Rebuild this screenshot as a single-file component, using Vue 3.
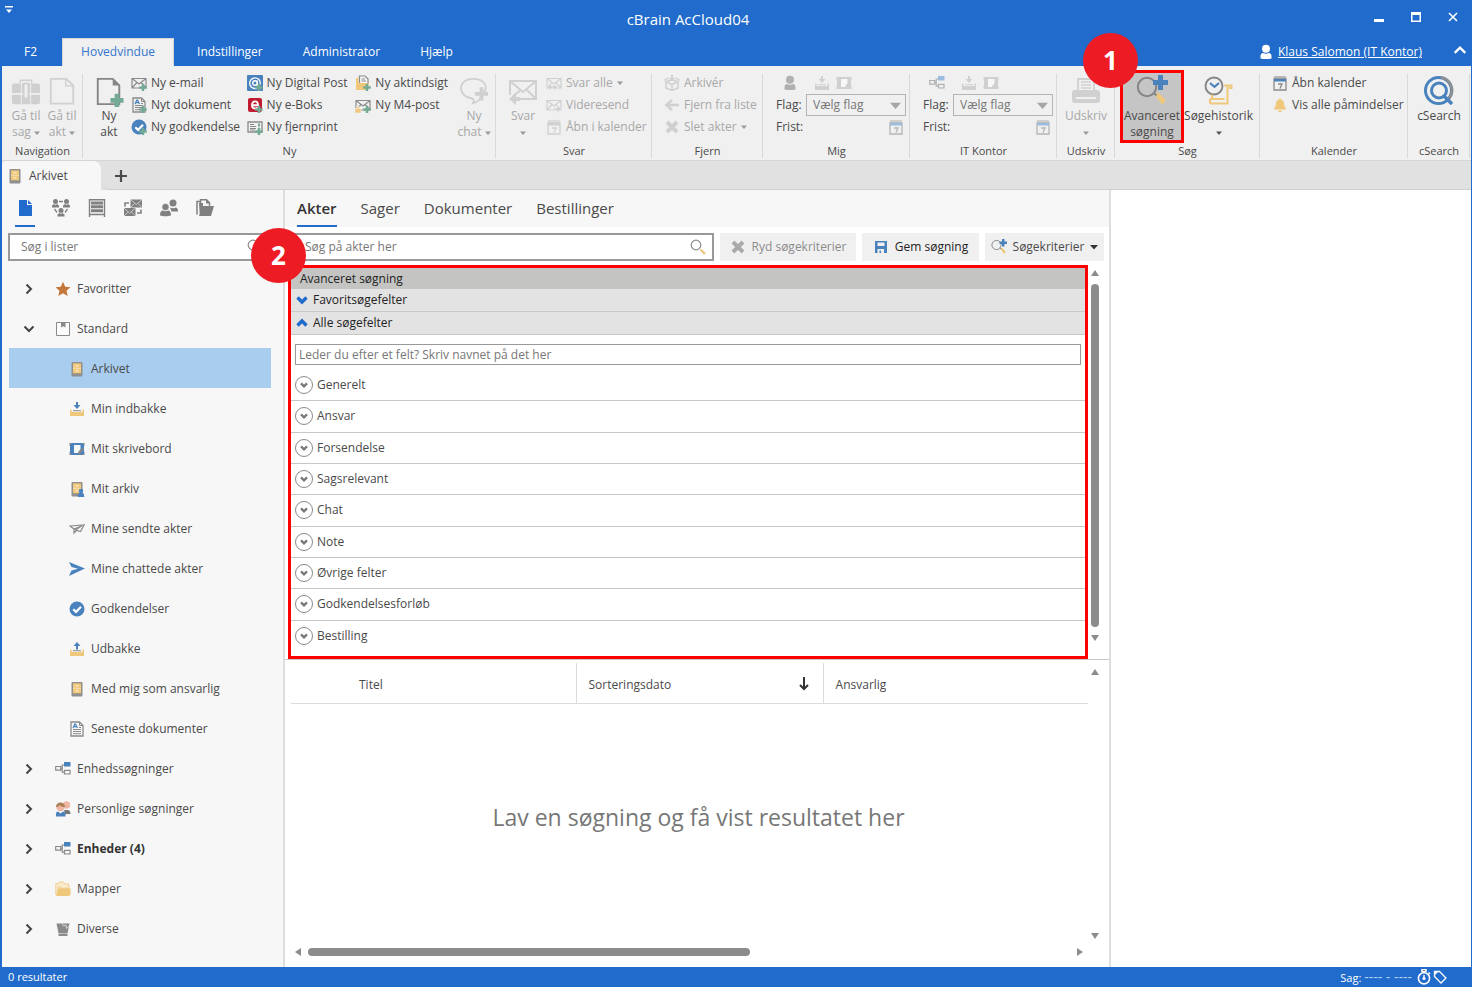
<script setup>
import { ref } from 'vue'

const ribbonTabs = ['F2', 'Hovedvindue', 'Indstillinger', 'Administrator', 'Hjælp']
const activeRibbonTab = ref('Hovedvindue')

const newItems = [
  [
    { icon: 'mail-plus', label: 'Ny e-mail' },
    { icon: 'doc-plus', label: 'Nyt dokument' },
    { icon: 'check-plus', label: 'Ny godkendelse' }
  ],
  [
    { icon: 'digital-post', label: 'Ny Digital Post' },
    { icon: 'eboks', label: 'Ny e-Boks' },
    { icon: 'remote-print', label: 'Ny fjernprint' }
  ],
  [
    { icon: 'insight', label: 'Ny aktindsigt' },
    { icon: 'm4-post', label: 'Ny M4-post' }
  ]
]

const replyItems = [
  { icon: 'reply-all', label: 'Svar alle', menu: true },
  { icon: 'forward', label: 'Videresend' },
  { icon: 'calendar', label: 'Åbn i kalender' }
]

const removeItems = [
  { icon: 'archive-box', label: 'Arkivér' },
  { icon: 'arrow-left', label: 'Fjern fra liste' },
  { icon: 'cross', label: 'Slet akter', menu: true }
]

const calendarItems = [
  { icon: 'calendar', label: 'Åbn kalender' },
  { icon: 'bell', label: 'Vis alle påmindelser' }
]

const flagGroups = [
  { name: 'Mig', id: 'mig', icon: 'person' },
  { name: 'IT Kontor', id: 'it', icon: 'unit' }
]

const listTypes = [
  { icon: 'file', label: 'Akter' },
  { icon: 'network', label: 'Netværk' },
  { icon: 'shelf', label: 'Arkiv' },
  { icon: 'mails', label: 'Post' },
  { icon: 'people', label: 'Personer' },
  { icon: 'folders', label: 'Mapper' }
]
const activeListType = ref('file')

const tree = [
  { label: 'Favoritter', icon: 'star', state: 'closed' },
  { label: 'Standard', icon: 'standard', state: 'open' },
  { label: 'Arkivet', icon: 'cabinet', child: true },
  { label: 'Min indbakke', icon: 'inbox', child: true },
  { label: 'Mit skrivebord', icon: 'desk', child: true },
  { label: 'Mit arkiv', icon: 'my-cabinet', child: true },
  { label: 'Mine sendte akter', icon: 'plane', child: true },
  { label: 'Mine chattede akter', icon: 'send', child: true },
  { label: 'Godkendelser', icon: 'check', child: true },
  { label: 'Udbakke', icon: 'outbox', child: true },
  { label: 'Med mig som ansvarlig', icon: 'cabinet', child: true },
  { label: 'Seneste dokumenter', icon: 'doc', child: true },
  { label: 'Enhedssøgninger', icon: 'unit', state: 'closed' },
  { label: 'Personlige søgninger', icon: 'persons', state: 'closed' },
  { label: 'Enheder (4)', icon: 'unit', state: 'closed', bold: true },
  { label: 'Mapper', icon: 'folder', state: 'closed' },
  { label: 'Diverse', icon: 'bin', state: 'closed' }
]
const selected = ref('Arkivet')

const searchTabs = ['Akter', 'Sager', 'Dokumenter', 'Bestillinger']
const activeSearchTab = ref('Akter')

const fieldGroups = [
  'Generelt',
  'Ansvar',
  'Forsendelse',
  'Sagsrelevant',
  'Chat',
  'Note',
  'Øvrige felter',
  'Godkendelsesforløb',
  'Bestilling'
]

const listQuery = ref('')
const query = ref('')
const fieldQuery = ref('')
</script>

<template>
  <!-- icon sprite -->
  <svg class="sprite" aria-hidden="true">
    <symbol id="plus" viewBox="0 0 16 16">
      <path d="M11 9h2v2.500h2.500v2H13V16h-2v-2.500H8.500v-2H11z" fill="var(--green)" stroke="var(--green)" stroke-width=".5" />
    </symbol>
    <symbol id="envelope" viewBox="0 0 16 16">
      <path d="M1 3.500h14v9.500H1zM1 3.500l7 5.500 7-5.500M1 13l5-5.500M15 13l-5-5.500" fill="none" stroke="currentColor" stroke-width="1.200" />
    </symbol>
    <symbol id="mail-plus" viewBox="0 0 16 16"><use href="#envelope" /><use href="#plus" /></symbol>
    <symbol id="doc" viewBox="0 0 16 16">
      <path d="M2 1h8.500L14 4.500V15H2z" fill="none" stroke="currentColor" stroke-width="1.300" />
      <path d="M10.500 1v3.500H14" fill="none" stroke="currentColor" />
      <path d="M4 8.500h8M4 10.500h8M4 12.700h8M10 6.500h2" stroke="currentColor" />
      <path d="M4 7l1.800-4h.8L8.400 7M4.800 5.600h2.800" fill="none" stroke="var(--blue)" stroke-width="1.200" />
    </symbol>
    <symbol id="doc-plus" viewBox="0 0 16 16"><use href="#doc" /><use href="#plus" /></symbol>
    <symbol id="check" viewBox="0 0 16 16">
      <circle cx="8" cy="8" r="7.500" fill="var(--blue)" />
      <path d="M4.300 8.200l2.700 2.700 5-5.200" fill="none" stroke="#fff" stroke-width="2.200" />
    </symbol>
    <symbol id="check-plus" viewBox="0 0 16 16"><use href="#check" /><use href="#plus" /></symbol>
    <symbol id="digital-post" viewBox="0 0 16 16">
      <rect width="16" height="16" rx="1" fill="var(--blue)" />
      <circle cx="8" cy="8" r="2.300" fill="none" stroke="#fff" stroke-width="1.400" />
      <path d="M10.300 5.500v3.700c0 2 3 1.500 3-1.200A5.300 5.300 0 1 0 8 13.500h2" fill="none" stroke="#fff" stroke-width="1.300" />
      <use href="#plus" />
    </symbol>
    <symbol id="eboks" viewBox="0 0 16 16">
      <rect x="1" y="1" width="14" height="14" rx="2" fill="#c01c30" />
      <path d="M5 8.200h6c0-5-6-5-6-.2 0 4.200 4 4 5.600 2.500" fill="none" stroke="#fff" stroke-width="1.900" />
      <use href="#plus" />
    </symbol>
    <symbol id="remote-print" viewBox="0 0 16 16">
      <path d="M1 3h14v10H1z" fill="none" stroke="currentColor" stroke-width="1.300" />
      <path d="M3 5.500h4M3 7.500h6M3 9.500h6M3 11h5" stroke="currentColor" />
      <path d="M12 4.500v3" stroke="var(--green)" stroke-width="2" />
      <use href="#plus" />
    </symbol>
    <symbol id="insight" viewBox="0 0 16 16">
      <path d="M4.500 8V1H10l3 3v5" fill="#f7f7f7" stroke="currentColor" stroke-width="1.200" />
      <path d="M6.500 4H10M6.500 6H11" stroke="currentColor" />
      <path d="M1 3h2.500v5H14l-1.500 7H1z" fill="var(--yellow)" />
      <use href="#plus" />
    </symbol>
    <symbol id="m4-post" viewBox="0 0 16 16">
      <use href="#envelope" />
      <path d="M0 11.500h6V16H0zM1.500 11.500V9.500h3v2" fill="var(--yellow)" stroke="#f0f0f0" stroke-width=".6" />
      <use href="#plus" />
    </symbol>
    <symbol id="reply-all" viewBox="0 0 16 16">
      <use href="#envelope" />
      <path d="M1 12l4-3.500V11h2.500V9L12 12l-4.500 3.500V13H5v2.500z" fill="currentColor" stroke="#f0f0f0" stroke-width=".6" />
    </symbol>
    <symbol id="forward" viewBox="0 0 16 16">
      <use href="#envelope" />
      <path d="M15.500 12L11 8.300V11H7.500v2H11v2.700z" fill="currentColor" stroke="#f0f0f0" stroke-width=".6" />
    </symbol>
    <symbol id="calendar" viewBox="0 0 16 16">
      <path d="M2 4h12v11H2z" fill="none" stroke="currentColor" stroke-width="1.300" />
      <path d="M2 4h12v2.500H2z" fill="var(--blue)" />
      <path d="M3 1v3M5 1v3M7 1v3M9 1v3M11 1v3M13 1v3" stroke="currentColor" stroke-width="1.100" />
      <path d="M6 9h4l-2 4.500" fill="none" stroke="currentColor" stroke-width="1.300" />
    </symbol>
    <symbol id="archive-box" viewBox="0 0 16 16">
      <path d="M2 7l6-2.500L14 7v6l-6 2.500L2 13zM2 7l6 2.500L14 7M8 9.500v6" fill="none" stroke="currentColor" stroke-width="1.500" />
      <path d="M2 7L.8 4.800 5 3M14 7l1.200-2.200L11 3" fill="none" stroke="currentColor" stroke-width="1.300" />
      <path d="M7 0h2v3h2L8 6.500 5 3h2z" fill="currentColor" />
    </symbol>
    <symbol id="arrow-left" viewBox="0 0 16 16">
      <path d="M15 8H4M8 3L2.500 8 8 13" fill="none" stroke="currentColor" stroke-width="2.600" />
    </symbol>
    <symbol id="cross" viewBox="0 0 16 16">
      <path d="M3 3l10 10M13 3L3 13" stroke="currentColor" stroke-width="4" />
    </symbol>
    <symbol id="bell" viewBox="0 0 16 16">
      <path d="M8 1.500c1 0 1 1 1 1 3 .8 3 3.500 3.300 6 .2 1.500 1.700 2.500 1.700 4H2c0-1.500 1.500-2.500 1.700-4 .3-2.500.3-5.200 3.300-6 0 0 0-1 1-1zM6 13.500h4c0 2-4 2-4 0z" fill="var(--yellow)" />
    </symbol>
    <symbol id="person" viewBox="0 0 16 16">
      <circle cx="8" cy="4.700" r="4" fill="currentColor" />
      <path d="M2.500 14.500V12c0-1.500 1-3 2.500-3 2 1 4 1 6 0 1.500 0 2.500 1.500 2.500 3v2.500c-3 .8-8 .8-11 0z" fill="currentColor" />
    </symbol>
    <symbol id="inbox" viewBox="0 0 16 16">
      <path d="M1 8.500h1.500V11h11V8.500H15V15H1z" fill="var(--yellow)" />
      <path d="M4 9.700h8" stroke="currentColor" />
      <path d="M7 1h2v3h2.500L8 8 4.500 4H7z" fill="var(--blue)" />
    </symbol>
    <symbol id="outbox" viewBox="0 0 16 16">
      <path d="M1 8.500h1.500V11h11V8.500H15V15H1z" fill="var(--yellow)" />
      <path d="M4 9.700h8" stroke="currentColor" />
      <path d="M7 8.500h2V5h2.500L8 1 4.500 5H7z" fill="var(--blue)" />
    </symbol>
    <symbol id="desk" viewBox="0 0 16 16">
      <path d="M.5 2h4v3h-4zM11.500 2h4v3h-4zM.5 11h4v3h-4zM11.500 11h4v3h-4z" fill="currentColor" />
      <rect x="1" y="2" width="14" height="12" rx="3.500" fill="var(--blue)" />
      <path d="M5 4h6.500v4L9 12H5z" fill="#f7f7f7" />
      <path d="M14.500 7L11 12l-1.500 1 .5-2z" fill="currentColor" stroke="currentColor" stroke-width="1.200" />
    </symbol>
    <symbol id="unit" viewBox="0 0 16 16">
      <path d="M9 1h6.500v4.500H9z" fill="var(--blue)" />
      <path d="M.7 5.500h5v3.700h-5zM9.500 9.300H15V13H9.500zM5.700 7.500h1.500V4H9M7.200 7.500v3.700h2.300" fill="none" stroke="currentColor" stroke-width="1.200" />
    </symbol>
    <symbol id="file" viewBox="0 0 16 16"><path d="M2 0h8v5h5v11H2zM11 0l4 4h-4z" fill="currentColor" /></symbol>
    <symbol id="network" viewBox="0 0 18 18">
      <g fill="currentColor">
        <circle cx="3.500" cy="2.500" r="2.500" /><path d="M0 8.500V6.500l2-1.500 1.500 1L5 5l2 1.500v2z" />
        <circle cx="14.500" cy="2.500" r="2.500" /><path d="M11 8.500V6.500l2-1.500 1.500 1L16 5l2 1.500v2z" />
        <circle cx="9" cy="11.500" r="2.500" /><path d="M5.500 17.500v-2l2-1.500 1.500 1 1.500-1 2 1.500v2z" />
      </g>
      <path d="M7 2.500h4M2.500 10l2.500 3.500M15.500 10L13 13.500" stroke="currentColor" stroke-width="1.300" />
    </symbol>
    <symbol id="shelf" viewBox="0 0 18 18">
      <path d="M1.500 18V.8h15V18M1.500 15.500h15" fill="none" stroke="currentColor" stroke-width="1.400" />
      <path d="M3 2.500h12v3H3zM3 6.300h12v3H3zM3 10.200h12v3H3z" fill="currentColor" />
    </symbol>
    <symbol id="mails" viewBox="0 0 18 18">
      <path d="M6.500 .5H18v8H6.500zM0 9h11.500v8H0z" fill="currentColor" />
      <path d="M6.500 .5l5.800 5L18 .5M6.500 8.500l4-4M18 8.500l-4-4M0 9l5.700 5 5.800-5M0 17l4-4M11.500 17l-4-4" fill="none" stroke="#f7f7f7" stroke-width=".6" />
      <path d="M1 7.500V4h4M17 10.500V14h-4" fill="none" stroke="currentColor" stroke-width="1.600" />
    </symbol>
    <symbol id="people" viewBox="0 0 18 18">
      <g fill="currentColor">
        <circle cx="13" cy="4" r="3.500" /><path d="M10 8.500c2 1 4 1 6 0 1.500.5 2 2 2 4h-6.500z" />
        <circle cx="5.500" cy="8" r="3.600" stroke="#f7f7f7" stroke-width=".6" />
        <path d="M0 16.500c0-3 .8-4.500 2.500-5 2 1 4 1 6 0 1.700.5 2.500 2 2.500 5-3 1-8 1-11 0z" />
      </g>
    </symbol>
    <symbol id="folders" viewBox="0 0 18 18">
      <path d="M1 15.500V2.500h3M4.500 15V.8h6l3 3v3" fill="none" stroke="currentColor" stroke-width="1.500" />
      <path d="M10 0l4.500 4.500H10zM3 17l3.500-10H18l-3 10z" fill="currentColor" />
      <path d="M3 4h4v5L4 16z" fill="currentColor" />
    </symbol>
    <symbol id="star" viewBox="0 0 16 16">
      <path d="M8 .8l2.200 4.900 5.300.5-4 3.600 1.200 5.200L8 12.200 3.300 15l1.200-5.200-4-3.600 5.300-.5z" fill="#c5763a" />
    </symbol>
    <symbol id="standard" viewBox="0 0 16 16">
      <path d="M1.500 1.500h13v13h-13z" fill="#fcfcfc" stroke="currentColor" />
      <path d="M6 2h4.500v4.500L8.200 5.200 6 6.500z" fill="currentColor" />
    </symbol>
    <symbol id="cabinet" viewBox="0 0 16 16">
      <rect x="2.500" y="1" width="11" height="14.500" rx="1" fill="#8f8f8f" />
      <path d="M4 2.300h8v10H4z" fill="var(--yellow)" />
      <path d="M4 7.300h8" stroke="#f7dfae" />
      <path d="M6.500 4.800h3M6.500 9.800h3" stroke="#fff4da" />
    </symbol>
    <symbol id="my-cabinet" viewBox="0 0 16 16">
      <use href="#cabinet" />
      <circle cx="12" cy="10" r="2.200" fill="var(--blue)" />
      <path d="M8.800 16c0-2.500.7-4 1.700-4h3c1 0 1.700 1.500 1.700 4z" fill="var(--blue)" />
    </symbol>
    <symbol id="plane" viewBox="0 0 16 16">
      <path d="M1 5l14-1-3.500 6.500-5-1.500L12.500 5 5 8zM5 8v4l2.500-2.500" fill="none" stroke="currentColor" stroke-width="1.200" />
    </symbol>
    <symbol id="send" viewBox="0 0 16 16">
      <path d="M0 1l16 6.500L0 15l2.500-5.500L9 7.800 2.500 6z" fill="var(--blue)" />
    </symbol>
    <symbol id="persons" viewBox="0 0 16 16">
      <circle cx="11.500" cy="4" r="3.700" fill="#efb6a6" />
      <path d="M9 9h3.500c2 0 3 1.500 3 4H10z" fill="#777" />
      <circle cx="5.500" cy="6" r="4.200" fill="#efb6a6" />
      <path d="M1 6c0-6 9-6 9 0-3 0-4-.6-5.500-2C4 5.500 2.500 6 1 6z" fill="#a98058" />
      <path d="M1 15.500C.5 12 1.500 10.700 3 10.500l2.500 2 2.500-2c1.500.2 3 1.500 2.500 5z" fill="var(--blue)" />
    </symbol>
    <symbol id="folder" viewBox="0 0 16 16">
      <path d="M.8 14V2.500h3l1-1.700H8l1 2h4.500v3H15" fill="#faebce" stroke="var(--yellow)" stroke-width=".8" />
      <path d="M2.500 13V5h3.500l1 1.500h8V13z" fill="#f5d9a4" />
      <path d="M1 15l2-7.500h12.500V14l-2 1z" fill="var(--yellow)" />
    </symbol>
    <symbol id="bin" viewBox="0 0 16 16">
      <path d="M1.500 2.500h13L12.500 12.500h-9z" fill="currentColor" />
      <path d="M3.500 13h9v2h-9z" fill="currentColor" />
      <path d="M7 2.500l1.500 2.500L11 4l.5 3.500L14 5" fill="none" stroke="#e3e3e3" stroke-width=".8" />
    </symbol>
    <symbol id="search" viewBox="0 0 16 16">
      <path d="M10.500 10.500L15 15" stroke="var(--yellow)" stroke-width="2.400" />
      <circle cx="6" cy="6" r="4.800" fill="none" stroke="currentColor" stroke-width="1.200" />
    </symbol>
    <symbol id="adv-search" viewBox="0 0 32 32">
      <path d="M19 20l3-2.500 8 8-4 4z" fill="var(--yellow)" />
      <circle cx="11" cy="12" r="9.200" fill="none" stroke="currentColor" stroke-width="2" />
      <path d="M17.500 17.500l3 3" stroke="currentColor" stroke-width="2" />
      <path d="M22 0h5v5h5v5h-5v5h-5v-5h-5V5h5z" fill="var(--blue)" />
    </symbol>
    <symbol id="history" viewBox="0 0 32 32">
      <circle cx="11" cy="11" r="8.500" fill="none" stroke="currentColor" stroke-width="1.900" />
      <path d="M7 8l4.500 3.800L16 8" fill="none" stroke="var(--blue)" stroke-width="2.200" />
      <path d="M21 10.500h7.500v2.500H26M24.500 10.500v18H9c-3 0-3-4.500 0-4.500h12.500M9 24v-4.500" fill="none" stroke="var(--yellow)" stroke-width="2" />
    </symbol>
    <symbol id="csearch" viewBox="0 0 32 32">
      <circle cx="15.500" cy="15.500" r="13" fill="none" stroke="var(--blue)" stroke-width="3" />
      <path d="M18 2.500a13 13 0 0 1 8 21" fill="none" stroke="#8a8f94" stroke-width="3" />
      <circle cx="16" cy="15.500" r="7.500" fill="none" stroke="var(--blue)" stroke-width="3" />
      <path d="M20 20l9 9" stroke="var(--blue)" stroke-width="3.500" />
    </symbol>
    <symbol id="briefcase" viewBox="0 0 32 32">
      <path d="M10 8V4.500h12V8" fill="none" stroke="currentColor" stroke-width="1.500" />
      <path d="M3 8h26c1 0 2 1 2 2v8H1v-8c0-1 1-2 2-2zM1 20h30v8c0 1-1 2-2 2H3c-1 0-2-1-2-2z" fill="currentColor" />
      <path d="M11 8v22M21 8v22" stroke="#f0f0f0" />
      <path d="M12.500 7h7v18h-7z" fill="currentColor" />
      <path d="M14.500 9h3v14h-3z" fill="#f0f0f0" />
    </symbol>
    <symbol id="page" viewBox="0 0 32 32">
      <path d="M4 3h16.500L28 10v19.500H4z" fill="none" stroke="currentColor" stroke-width="2" />
      <path d="M20 3v7.500h8z" fill="#f0f0f0" stroke="currentColor" stroke-width="1.500" />
    </symbol>
    <symbol id="new-page" viewBox="0 0 32 32">
      <path d="M4 3h16l7 7v20H4z" fill="none" stroke="currentColor" stroke-width="2" />
      <path d="M20 3v7h7z" fill="currentColor" />
      <path d="M22 19h5v4.500h4.500v5H27V33h-5v-4.500h-4.500v-5H22z" fill="var(--green)" />
    </symbol>
    <symbol id="chat" viewBox="0 0 32 32">
      <path d="M14 24C-2 22-2 3 15 3c14 0 16 10 11 15M14 24c2 1 2 3 1 5 4-1 7-3 8-6" fill="none" stroke="currentColor" stroke-width="2" />
      <path d="M22 12h4v5h5v4h-5v5h-4v-5h-5v-4h5z" fill="currentColor" />
    </symbol>
    <symbol id="reply" viewBox="0 0 32 32">
      <path d="M3 20V6h26v18H13M3 6l13 11L29 6M14 15L6 21M29 24l-9-9" fill="none" stroke="currentColor" stroke-width="2" />
      <path d="M2 24l7-6v4h4v4H9v4z" fill="currentColor" />
    </symbol>
    <symbol id="printer" viewBox="0 0 32 32">
      <path d="M8 15V4h16v11" fill="none" stroke="currentColor" stroke-width="1.800" />
      <path d="M11 7h10M11 10h10M11 13h10" stroke="currentColor" stroke-width="1.500" />
      <path d="M5 15h22c2 0 3 1 3 3v7c0 2-1 3-3 3H5c-2 0-3-1-3-3v-7c0-2 1-3 3-3z" fill="currentColor" />
      <path d="M6 23h20" stroke="#f0f0f0" stroke-width="2" />
    </symbol>
    <symbol id="save" viewBox="0 0 16 16">
      <path d="M2 2h12v12H2z" fill="var(--blue)" />
      <path d="M4.500 3.500h7V7h-7zM4.500 10H11v4H8v-2.500H6.500V14h-2z" fill="#f0f0f0" />
    </symbol>
    <symbol id="caret" viewBox="0 0 8 8"><path d="M0 2h8L4 6.500z" fill="currentColor" /></symbol>
    <symbol id="scroll-arrow" viewBox="0 0 10 10"><path d="M1 2h8L5 8z" fill="currentColor" /></symbol>
    <symbol id="chevron" viewBox="0 0 12 12">
      <path d="M1.500 3.500L6 8l4.500-4.500" fill="none" stroke="currentColor" stroke-width="2" />
    </symbol>
    <symbol id="thick-chevron" viewBox="0 0 12 12">
      <path d="M1.500 3.500L6 8l4.500-4.500" fill="none" stroke="currentColor" stroke-width="3.400" />
    </symbol>
    <symbol id="timer" viewBox="0 0 16 16">
      <circle cx="8" cy="9.300" r="5.600" fill="none" stroke="currentColor" stroke-width="1.600" />
      <path d="M6 .5h4v2H6zM8 2v2M12.500 3.500l1.500 1.500M8 6v3" stroke="currentColor" stroke-width="1.500" />
      <circle cx="8" cy="9.500" r="1.600" fill="currentColor" />
    </symbol>
    <symbol id="tag" viewBox="0 0 16 16">
      <path d="M2.500 2.500h5L14 9l-5 5-6.500-6.500z" fill="none" stroke="currentColor" stroke-width="1.300" />
      <path d="M2 2h5L2 7z" fill="currentColor" />
    </symbol>
  </svg>

  <div class="window">
    <header class="titlebar">
      <div class="title-row">
        <button class="quick" aria-label="Hurtig adgang">
          <svg viewBox="0 0 8 8"><path d="M0 0h8v1.500H0zM1 3.500h6L4 7z" fill="currentColor" /></svg>
        </button>
        <h1>cBrain AcCloud04</h1>
        <button class="win-btn" aria-label="Minimer">
          <svg viewBox="0 0 12 12"><path d="M1 8h10v3H1z" fill="currentColor" /></svg>
        </button>
        <button class="win-btn" aria-label="Maksimer">
          <svg viewBox="0 0 12 12"><path d="M1 1h10v10H1zM2.500 4v5.500h7V4z" fill="currentColor" fill-rule="evenodd" /></svg>
        </button>
        <button class="win-btn" aria-label="Luk">
          <svg viewBox="0 0 12 12"><path d="M2 2l8 8M10 2l-8 8" stroke="currentColor" stroke-width="1.600" /></svg>
        </button>
      </div>
      <nav class="ribbon-tabs">
        <button
          v-for="tab in ribbonTabs"
          :key="tab"
          :class="{ active: tab === activeRibbonTab }"
          @click="activeRibbonTab = tab"
        >{{ tab }}</button>
        <a class="user" href="#">
          <svg class="icon"><use href="#person" /></svg>
          <span>Klaus Salomon (IT Kontor)</span>
        </a>
        <button class="collapse" aria-label="Skjul båndet">
          <svg class="flip"><use href="#chevron" /></svg>
        </button>
      </nav>
    </header>

    <div class="ribbon">
      <section class="group g-nav">
        <div class="body disabled">
          <button class="big" disabled>
            <svg><use href="#briefcase" /></svg>
            <span>Gå til</span>
            <span>sag <svg class="caret"><use href="#caret" /></svg></span>
          </button>
          <button class="big" disabled>
            <svg><use href="#page" /></svg>
            <span>Gå til</span>
            <span>akt <svg class="caret"><use href="#caret" /></svg></span>
          </button>
        </div>
        <h2>Navigation</h2>
      </section>

      <section class="group g-new">
        <div class="body">
          <button class="big">
            <svg><use href="#new-page" /></svg>
            <span>Ny</span>
            <span>akt</span>
          </button>
          <div v-for="(column, i) in newItems" :key="i" class="column">
            <button v-for="item in column" :key="item.label" class="small">
              <svg class="icon"><use :href="'#' + item.icon" /></svg>{{ item.label }}
            </button>
          </div>
          <button class="big disabled" disabled>
            <svg><use href="#chat" /></svg>
            <span>Ny</span>
            <span>chat <svg class="caret"><use href="#caret" /></svg></span>
          </button>
        </div>
        <h2>Ny</h2>
      </section>

      <section class="group g-reply">
        <div class="body disabled">
          <button class="big" disabled>
            <svg><use href="#reply" /></svg>
            <span>Svar</span>
            <span><svg class="caret"><use href="#caret" /></svg></span>
          </button>
          <div class="column">
            <button v-for="item in replyItems" :key="item.label" class="small" disabled>
              <svg class="icon"><use :href="'#' + item.icon" /></svg>{{ item.label }}
              <svg v-if="item.menu" class="caret"><use href="#caret" /></svg>
            </button>
          </div>
        </div>
        <h2>Svar</h2>
      </section>

      <section class="group g-remove">
        <div class="body disabled">
          <div class="column">
            <button v-for="item in removeItems" :key="item.label" class="small" disabled>
              <svg class="icon"><use :href="'#' + item.icon" /></svg>{{ item.label }}
              <svg v-if="item.menu" class="caret"><use href="#caret" /></svg>
            </button>
          </div>
        </div>
        <h2>Fjern</h2>
      </section>

      <section v-for="group in flagGroups" :key="group.id" class="group g-flag">
        <div class="body flag-body">
          <div class="flag-icons">
            <svg class="icon owner"><use :href="'#' + group.icon" /></svg>
            <svg class="icon"><use href="#inbox" /></svg>
            <svg class="icon"><use href="#desk" /></svg>
          </div>
          <div class="flag-row">
            <label :for="'flag-' + group.id">Flag:</label>
            <span class="select">
              <select :id="'flag-' + group.id"><option>Vælg flag</option></select>
              <svg><use href="#caret" /></svg>
            </span>
          </div>
          <div class="flag-row">
            <span>Frist:</span>
            <button class="date" aria-label="Vælg frist"><svg class="icon"><use href="#calendar" /></svg></button>
          </div>
        </div>
        <h2>{{ group.name }}</h2>
      </section>

      <section class="group g-print">
        <div class="body disabled">
          <button class="big" disabled>
            <svg><use href="#printer" /></svg>
            <span>Udskriv</span>
            <span><svg class="caret"><use href="#caret" /></svg></span>
          </button>
        </div>
        <h2>Udskriv</h2>
      </section>

      <section class="group g-search">
        <div class="body">
          <button class="big marked">
            <svg><use href="#adv-search" /></svg>
            <span>Avanceret</span>
            <span>søgning</span>
            <b class="badge">1</b>
          </button>
          <button class="big">
            <svg><use href="#history" /></svg>
            <span>Søgehistorik</span>
            <span><svg class="caret"><use href="#caret" /></svg></span>
          </button>
        </div>
        <h2>Søg</h2>
      </section>

      <section class="group g-calendar">
        <div class="body">
          <div class="column">
            <button v-for="item in calendarItems" :key="item.label" class="small">
              <svg class="icon"><use :href="'#' + item.icon" /></svg>{{ item.label }}
            </button>
          </div>
        </div>
        <h2>Kalender</h2>
      </section>

      <section class="group g-csearch">
        <div class="body">
          <button class="big">
            <svg><use href="#csearch" /></svg>
            <span>cSearch</span>
          </button>
        </div>
        <h2>cSearch</h2>
      </section>
    </div>

    <div class="doc-tabs">
      <button class="doc-tab"><svg class="icon"><use href="#cabinet" /></svg>Arkivet</button>
      <button class="add" aria-label="Ny fane">
        <svg viewBox="0 0 12 12"><path d="M6 0v12M0 6h12" stroke="currentColor" stroke-width="2.200" /></svg>
      </button>
      <span class="strip"></span>
    </div>

    <div class="content">
      <aside class="sidebar">
        <nav class="list-types">
          <button
            v-for="type in listTypes"
            :key="type.icon"
            :aria-label="type.label"
            :class="{ active: type.icon === activeListType }"
            @click="activeListType = type.icon"
          >
            <svg><use :href="'#' + type.icon" /></svg>
          </button>
        </nav>
        <div class="search-box">
          <input v-model="listQuery" aria-label="Søg i lister" placeholder="Søg i lister" />
          <svg class="icon"><use href="#search" /></svg>
        </div>
        <ul class="tree">
          <li v-for="node in tree" :key="node.label">
            <button
              :class="{ child: node.child, bold: node.bold, selected: node.label === selected }"
              @click="selected = node.label"
            >
              <svg v-if="node.state" class="toggle" :class="node.state"><use href="#chevron" /></svg>
              <svg class="icon"><use :href="'#' + node.icon" /></svg>
              <span>{{ node.label }}</span>
            </button>
          </li>
        </ul>
      </aside>

      <main class="results">
        <nav class="search-tabs">
          <button
            v-for="tab in searchTabs"
            :key="tab"
            :class="{ active: tab === activeSearchTab }"
            @click="activeSearchTab = tab"
          >{{ tab }}</button>
        </nav>

        <div class="toolbar">
          <div class="search-box">
            <input v-model="query" aria-label="Søg på akter her" placeholder="Søg på akter her" />
            <svg class="icon"><use href="#search" /></svg>
          </div>
          <button class="clear disabled" disabled><svg class="icon"><use href="#cross" /></svg>Ryd søgekriterier</button>
          <button class="save"><svg class="icon"><use href="#save" /></svg>Gem søgning</button>
          <button class="criteria">
            <svg class="icon"><use href="#adv-search" /></svg>Søgekriterier
            <svg class="caret"><use href="#caret" /></svg>
          </button>
        </div>

        <div class="criteria-pane">
          <section class="panel">
            <b class="badge">2</b>
            <h2>Avanceret søgning</h2>
            <button class="section"><svg><use href="#thick-chevron" /></svg>Favoritsøgefelter</button>
            <button class="section"><svg class="flip"><use href="#thick-chevron" /></svg>Alle søgefelter</button>
            <input
              v-model="fieldQuery"
              aria-label="Find felt"
              placeholder="Leder du efter et felt? Skriv navnet på det her"
            />
            <ul>
              <li v-for="name in fieldGroups" :key="name">
                <button><i><svg><use href="#thick-chevron" /></svg></i>{{ name }}</button>
              </li>
            </ul>
          </section>
          <div class="vscroll">
            <svg class="flip"><use href="#scroll-arrow" /></svg>
            <span class="thumb"></span>
            <svg><use href="#scroll-arrow" /></svg>
          </div>
        </div>

        <div class="list-pane">
          <div class="list">
            <table>
              <thead>
                <tr>
                  <th class="col-title">Titel</th>
                  <th class="col-date">
                    <div>
                      Sorteringsdato
                      <svg viewBox="0 0 10 14"><path d="M5 0v12M1 8l4 4 4-4" fill="none" stroke="currentColor" stroke-width="2" /></svg>
                    </div>
                  </th>
                  <th>Ansvarlig</th>
                </tr>
              </thead>
            </table>
            <p>Lav en søgning og få vist resultatet her</p>
            <div class="hscroll">
              <svg class="left"><use href="#scroll-arrow" /></svg>
              <span class="track"><span class="thumb"></span></span>
              <svg class="right"><use href="#scroll-arrow" /></svg>
            </div>
          </div>
          <div class="vscroll">
            <svg class="flip"><use href="#scroll-arrow" /></svg>
            <span class="gap"></span>
            <svg><use href="#scroll-arrow" /></svg>
          </div>
        </div>
      </main>

      <aside class="preview"></aside>
    </div>

    <footer class="status">
      <span>0 resultater</span>
      <span class="case">Sag: <em>---- - ----</em></span>
      <svg class="icon"><use href="#timer" /></svg>
      <svg class="icon"><use href="#tag" /></svg>
    </footer>
  </div>
</template>

<style>
body {
  margin: 0;
}
</style>

<style scoped>
.sprite {
  position: absolute;
  width: 0;
  height: 0;
}

.window {
  --brand: #206bcb;
  --blue: #4a82bd;
  --green: #74ab94;
  --yellow: #efc87b;
  display: flex;
  flex-direction: column;
  min-height: 100vh;
  box-sizing: border-box;
  border: solid var(--brand);
  border-width: 0 1px 0 2px;
  background: #fff;
  color: #4a4a4a;
  font: 12px/16px 'Open Sans', 'Noto Sans', sans-serif;
}

button,
input,
select {
  box-sizing: border-box;
  margin: 0;
  padding: 0;
  border: 0;
  background: none;
  color: inherit;
  font: inherit;
}

h1,
h2,
p,
ul {
  margin: 0;
  padding: 0;
  font-weight: normal;
  list-style: none;
}

svg {
  flex: none;
}

.icon {
  width: 16px;
  height: 16px;
  color: #8a8a8a;
}

.caret {
  width: 6px;
  height: 6px;
  color: #555;
}

.flip {
  transform: rotate(180deg);
}

.badge {
  position: absolute;
  z-index: 2;
  top: -40px;
  left: -40px;
  width: 55px;
  height: 55px;
  border-radius: 50%;
  background: #ed1c24;
  color: #fff;
  font-size: 26px;
  font-weight: bold;
  line-height: 54px;
  text-align: center;
}

/* title bar */
.titlebar {
  background: var(--brand);
  color: #fff;
}

.title-row {
  display: flex;
  align-items: center;
  height: 38px;
}

.title-row h1 {
  flex: 1;
  font-size: 15px;
  line-height: 20px;
  text-align: center;
}

.quick {
  align-self: flex-start;
  width: 14px;
  padding-top: 6px;
  line-height: 8px;
}

.quick svg {
  width: 8px;
  height: 8px;
}

.win-btn {
  width: 37px;
  height: 38px;
}

.win-btn svg {
  width: 12px;
  height: 12px;
}

.ribbon-tabs {
  display: flex;
  align-items: stretch;
  height: 28px;
  padding-left: 2px;
}

.ribbon-tabs button {
  padding: 0 20px;
}

.ribbon-tabs .active {
  margin: 0 3px 0 5px;
  padding: 0 18px 1px;
  border: 1px solid #d6d6d6;
  border-bottom: 0;
  background: #f0f0f0;
  color: #3376cc;
}

.user {
  display: flex;
  align-items: center;
  gap: 4px;
  margin-left: auto;
  color: #fff;
}

.user .icon {
  color: #fff;
}

.ribbon-tabs .collapse {
  padding: 0 4px 0 31px;
}

.collapse svg {
  width: 14px;
  height: 14px;
}

/* ribbon */
.ribbon {
  display: flex;
  padding: 4px 0 1px;
  background: #f0f0f0;
  border-bottom: 1px solid #d6d6d6;
}

.group {
  display: flex;
  flex: none;
  flex-direction: column;
  box-sizing: border-box;
  background: linear-gradient(#d9d9d9, #d9d9d9) right 4px / 1px 84px no-repeat;
}

.group h2 {
  font-size: 11px;
  line-height: 16px;
  text-align: center;
}

.body {
  display: flex;
  height: 73px;
}

.disabled {
  --blue: #d0d0d0;
  --green: #d0d0d0;
  --yellow: #d0d0d0;
  color: #a8a8a8;
}

.disabled svg {
  color: #d0d0d0;
}

.disabled .caret {
  color: #999;
}

.big {
  display: flex;
  flex-direction: column;
  align-items: center;
  padding-top: 5px;
  white-space: nowrap;
}

.big > svg {
  width: 32px;
  height: 32px;
  margin-bottom: 1px;
}

.big:not(:disabled) > svg {
  color: #858585;
}

.column {
  padding-top: 2px;
}

.small {
  display: flex;
  align-items: center;
  gap: 4px;
  height: 22px;
  white-space: nowrap;
}

.g-nav {
  width: 81px;
}

.g-nav .body {
  padding-left: 6px;
}

.g-nav .big {
  width: 36px;
}

.g-nav .big > svg,
.g-new .big > svg {
  width: 30px;
}

.g-new {
  width: 413px;
}

.g-new .body {
  padding-left: 4px;
}

.g-new .big {
  width: 44px;
}

.g-new .column {
  width: 97px;
}

.g-new .column:nth-child(2) {
  width: 116px;
}

.g-new .column:nth-child(3) {
  width: 109px;
}

.g-reply {
  width: 156px;
}

.g-reply .big {
  width: 50px;
  padding-left: 4px;
}

.g-remove {
  width: 111px;
}

.g-remove .body {
  padding-left: 12px;
}

.g-flag {
  width: 147px;
}

.flag-body {
  --blue: #9dbde0;
  flex-direction: column;
  box-sizing: border-box;
  padding: 2px 4px 0 13px;
}

.flag-icons {
  --yellow: #d0d0d0;
  display: flex;
  align-items: center;
  gap: 6px;
  height: 22px;
  padding-left: 6px;
}

.flag-icons .icon {
  --blue: #d0d0d0;
  color: #d0d0d0;
}

.flag-icons .owner {
  --blue: #9dbde0;
  margin-right: 10px;
  color: #b0b0b0;
}

.flag-row {
  display: flex;
  align-items: center;
  justify-content: space-between;
  height: 22px;
}

.select {
  position: relative;
  width: 100px;
}

.select select {
  display: block;
  width: 100%;
  height: 22px;
  padding-left: 6px;
  border: 1px solid #b4b4b4;
  appearance: none;
  color: #777;
}

.select svg {
  position: absolute;
  top: 6px;
  right: 5px;
  width: 11px;
  height: 11px;
  color: #a5a5a5;
  pointer-events: none;
}

.date {
  width: 18px;
  height: 16px;
}

.date .icon {
  display: block;
  color: #b5b5b5;
}

.g-print {
  width: 58px;
}

.g-print .body,
.g-csearch .body {
  justify-content: center;
}

.g-search {
  width: 145px;
}

.g-search .body {
  padding-left: 5px;
}

.marked {
  position: relative;
  width: 64px;
  padding-top: 2px;
  border: 3px solid #f00;
  background: #c5c5c5;
}

.g-search .big + .big {
  width: 69px;
}

.g-calendar {
  width: 148px;
}

.g-calendar .body {
  padding-left: 12px;
}

.g-csearch {
  width: 62px;
}

/* document tabs */
.doc-tabs {
  display: flex;
  height: 29px;
  background: #e1e1e1;
}

.doc-tab {
  display: flex;
  align-items: center;
  gap: 6px;
  width: 99px;
  padding-left: 5px;
  border-radius: 4px 8px 0 0;
  background: #f7f7f7;
}

.add {
  width: 40px;
  border-bottom: 1px solid #d0d0d0;
  border-radius: 0 0 0 8px;
}

.add svg {
  width: 12px;
  height: 12px;
  vertical-align: middle;
}

.strip {
  flex: 1;
  border-bottom: 1px solid #d0d0d0;
}

/* sidebar */
.content {
  display: flex;
  flex: 1;
}

.sidebar {
  flex: 0 0 281px;
  border-right: 2px solid #dedede;
  background: #f7f7f7;
}

.list-types {
  display: flex;
  gap: 16px;
  padding: 0 13px;
}

.list-types button {
  width: 20px;
  height: 37px;
  border-bottom: 2px solid transparent;
  color: #808080;
}

.list-types .active {
  border-color: var(--brand);
  color: var(--brand);
}

.list-types svg {
  width: 18px;
  height: 18px;
  vertical-align: middle;
}

.list-types .active svg {
  width: 16px;
  height: 16px;
}

.search-box {
  display: flex;
  align-items: center;
  box-sizing: border-box;
  height: 28px;
  padding: 0 6px 0 11px;
  border: 2px solid #999;
  background: #fff;
}

.search-box input {
  flex: 1;
  min-width: 0;
  outline: 0;
}

input::placeholder {
  color: #777;
  opacity: 1;
}

.sidebar .search-box {
  margin: 6px 12px 7px 6px;
}

.tree button {
  display: flex;
  align-items: center;
  width: 262px;
  height: 40px;
  margin-left: 7px;
  padding-top: 1px;
}

.tree .toggle {
  width: 12px;
  height: 12px;
  margin: 0 20px 0 14px;
  color: #444;
}

.tree .closed {
  transform: rotate(-90deg);
}

.tree span {
  margin-left: 6px;
}

.tree .child {
  padding-left: 60px;
}

.tree .selected {
  background: #a8cdef;
}

.tree .bold {
  color: #333;
  font-weight: bold;
}

/* search area */
.results {
  display: flex;
  flex: 1;
  flex-direction: column;
  min-width: 0;
  border-right: 2px solid #dedede;
}

.search-tabs {
  display: flex;
  gap: 24px;
  padding: 0 12px;
  background: #f7f7f7;
  font-size: 15px;
}

.search-tabs button {
  height: 37px;
  border-bottom: 2px solid transparent;
}

.search-tabs .active {
  border-color: var(--brand);
  color: #333;
  font-weight: 600;
}

.toolbar {
  display: flex;
  gap: 6px;
  padding: 6px 5px 4px 4px;
}

.toolbar .search-box {
  flex: 1;
  padding-left: 14px;
}

.toolbar button {
  display: flex;
  align-items: center;
  justify-content: center;
  gap: 6px;
  height: 28px;
  background: #f0f0f0;
  white-space: nowrap;
}

.toolbar .clear {
  width: 136px;
  color: #8c8c8c;
}

.toolbar .clear .icon {
  color: #aaa;
}

.toolbar .save {
  width: 117px;
  color: #222;
}

.toolbar .criteria {
  width: 119px;
}

.toolbar .caret {
  width: 8px;
  height: 8px;
  color: #333;
}

.criteria-pane {
  display: flex;
  border-bottom: 1px solid #c8c8c8;
}

.panel {
  position: relative;
  display: flex;
  flex: 1;
  flex-direction: column;
  box-sizing: border-box;
  height: 394px;
  margin-left: 3px;
  padding-bottom: 4px;
  border: 3px solid #f00;
}

.panel h2 {
  padding-left: 9px;
  background: #c4c5c2;
  color: #222;
  font-size: 12px;
  line-height: 21px;
}

.section {
  display: flex;
  align-items: center;
  gap: 5px;
  height: 23px;
  padding-left: 5px;
  border-bottom: 1px solid #c8c8c8;
  background: #e3e3e3;
  color: #222;
}

.section svg {
  width: 12px;
  height: 12px;
  color: var(--brand);
}

.panel input {
  height: 21px;
  margin: 9px 4px 5px;
  padding: 0 3px;
  border: 1px solid #999;
}

.panel ul {
  display: flex;
  flex: 1;
  flex-direction: column;
}

.panel li {
  display: flex;
  flex: 1;
  align-items: center;
  border-bottom: 1px solid #c8c8c8;
}

.panel li:last-child {
  border-color: transparent;
}

.panel li button {
  display: flex;
  align-items: center;
  gap: 4px;
  padding-left: 4px;
}

.panel i {
  display: flex;
  align-items: center;
  justify-content: center;
  width: 16px;
  height: 16px;
  border: 1px solid #8a8a8a;
  border-radius: 50%;
}

.panel li svg {
  width: 8px;
  height: 8px;
  color: #777;
}

.vscroll {
  display: flex;
  flex-direction: column;
  align-items: center;
  gap: 6px;
  width: 14px;
  margin-right: 7px;
  padding: 3px 0 16px;
  color: #8c8c8c;
}

.vscroll svg,
.hscroll svg {
  width: 10px;
  height: 10px;
}

.thumb {
  border-radius: 4px;
  background: #8c8c8c;
}

.vscroll .thumb {
  flex: 1;
  width: 8px;
}

.vscroll .gap {
  flex: 1;
}

/* result list */
.list-pane {
  display: flex;
  flex: 1;
}

.list {
  display: flex;
  flex: 1;
  flex-direction: column;
  padding: 3px 0 10px 6px;
}

table {
  width: 100%;
  table-layout: fixed;
  border-collapse: collapse;
}

th {
  box-sizing: border-box;
  height: 40px;
  padding: 4px 12px 0;
  border-bottom: 1px solid #dcdcdc;
  font-weight: normal;
  text-align: left;
}

th + th {
  border-left: 1px solid #dcdcdc;
}

.col-title {
  width: 285px;
  padding-left: 68px;
}

.col-date {
  width: 31%;
}

th div {
  display: flex;
  justify-content: space-between;
}

th svg {
  width: 10px;
  height: 14px;
  margin-right: 2px;
  color: #333;
}

.list p {
  flex: 1;
  padding: 95px 0 0 18px;
  color: #777;
  font-size: 23px;
  line-height: 36px;
  text-align: center;
}

.hscroll {
  display: flex;
  align-items: center;
  gap: 5px;
  padding: 0 3px 0 2px;
  color: #8c8c8c;
}

.hscroll .left {
  transform: rotate(90deg);
}

.hscroll .right {
  transform: rotate(-90deg);
}

.track {
  display: flex;
  flex: 1;
}

.track .thumb {
  width: 58%;
  height: 8px;
}

.list-pane .vscroll {
  padding: 7px 0 26px;
}

.preview {
  flex: 0 0 360px;
}

/* status bar */
.status {
  display: flex;
  align-items: center;
  height: 20px;
  padding: 0 23px 0 6px;
  background: var(--brand);
  color: #fff;
  font-size: 11px;
}

.status .case {
  margin: 0 4px 0 auto;
}

.status em {
  color: #b5d0f0;
  font-size: 14px;
  font-style: normal;
}

.status .icon {
  color: #fff;
}
</style>
